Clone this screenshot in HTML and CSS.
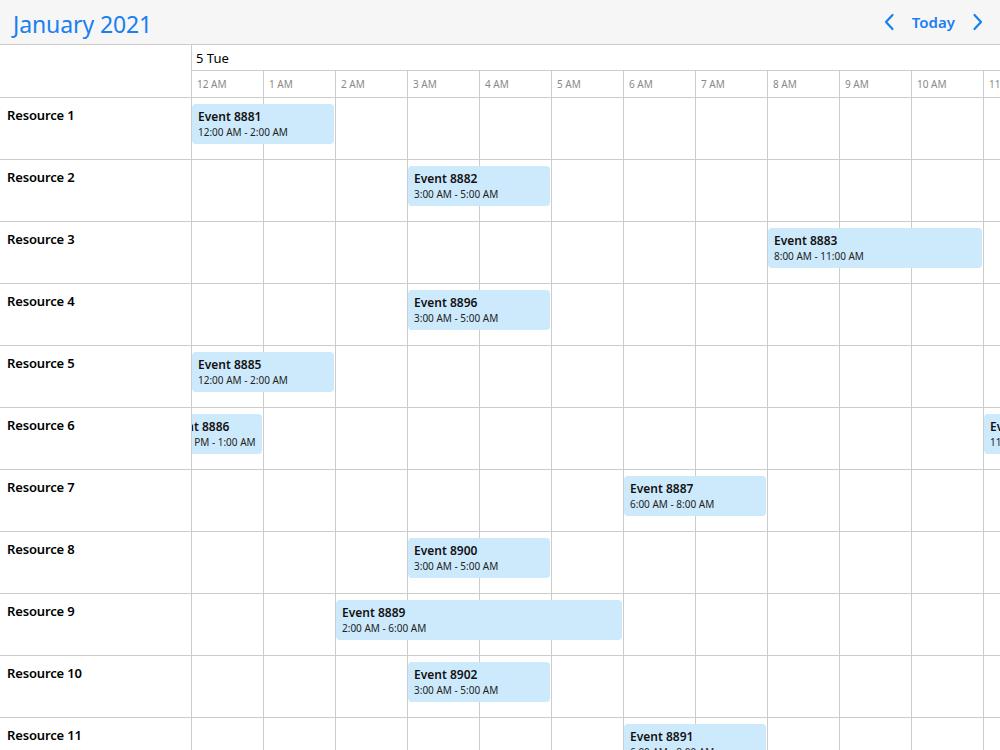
FILE: index.html
```html
<!DOCTYPE html>
<html>
<head>
<meta charset="utf-8">
<link rel="stylesheet" href="styles.css">
</head>
<body>
<div class="app">
  <header class="toolbar">
    <h1 class="title">January 2021</h1>
    <nav class="nav">
      <button class="nav-btn" aria-label="Previous">
        <svg width="12" height="18" viewBox="0 0 12 18"><path d="M9.5 2 L3 9 L9.5 16" fill="none" stroke="currentColor" stroke-width="2.2" stroke-linecap="round" stroke-linejoin="round"/></svg>
      </button>
      <button class="nav-today">Today</button>
      <button class="nav-btn" aria-label="Next">
        <svg width="12" height="18" viewBox="0 0 12 18"><path d="M2.5 2 L9 9 L2.5 16" fill="none" stroke="currentColor" stroke-width="2.2" stroke-linecap="round" stroke-linejoin="round"/></svg>
      </button>
    </nav>
  </header>

  <div class="scheduler">
    <div class="head-row">
      <div class="corner"></div>
      <div class="head-time">
        <div class="date-row">5 Tue</div>
        <div class="hours" id="hours"></div>
      </div>
    </div>
    <div id="rows"></div>
  </div>
</div>
<script src="app.js"></script>
</body>
</html>
```

FILE: app.js
```js
(function () {
  var labels = [];
  for (var h = 0; h < 24; h++) {
    var hh = h % 12 === 0 ? 12 : h % 12;
    labels.push(hh + (h < 12 ? ' AM' : ' PM'));
  }
  var hours = document.getElementById('hours');
  labels.forEach(function (l) {
    var d = document.createElement('div');
    d.className = 'hour-cell';
    d.textContent = l;
    hours.appendChild(d);
  });

  var data = [
    [["8881", 0, 2, "12:00 AM - 2:00 AM"]],
    [["8882", 3, 5, "3:00 AM - 5:00 AM"]],
    [["8883", 8, 11, "8:00 AM - 11:00 AM"]],
    [["8896", 3, 5, "3:00 AM - 5:00 AM"]],
    [["8885", 0, 2, "12:00 AM - 2:00 AM"]],
    [["8886", -0.45, 1, "11:30 PM - 1:00 AM"], ["8898", 11, 13, "11:00 AM - 1:00 PM"]],
    [["8887", 6, 8, "6:00 AM - 8:00 AM"]],
    [["8900", 3, 5, "3:00 AM - 5:00 AM"]],
    [["8889", 2, 6, "2:00 AM - 6:00 AM"]],
    [["8902", 3, 5, "3:00 AM - 5:00 AM"]],
    [["8891", 6, 8, "6:00 AM - 8:00 AM"]],
    []
  ];
  var rows = document.getElementById('rows');
  data.forEach(function (evs, i) {
    var row = document.createElement('div');
    row.className = 'row';
    var res = document.createElement('div');
    res.className = 'resource';
    res.textContent = 'Resource ' + (i + 1);
    row.appendChild(res);
    var lane = document.createElement('div');
    lane.className = 'lane';
    for (var h = 0; h < 24; h++) {
      var c = document.createElement('div');
      c.className = 'cell';
      lane.appendChild(c);
    }
    evs.forEach(function (e) {
      var ev = document.createElement('div');
      ev.className = 'event';
      var left = Math.round(e[1] * 72);
      ev.style.left = left + 'px';
      ev.style.width = (e[2] * 72 - left - 2) + 'px';
      ev.innerHTML = '<div class="ev-title">Event ' + e[0] + '</div><div class="ev-time">' + e[3] + '</div>';
      lane.appendChild(ev);
    });
    row.appendChild(lane);
    rows.appendChild(row);
  });
})();
```

FILE: styles.css
```css
* { box-sizing: border-box; }
html, body {
  margin: 0;
  padding: 0;
  width: 1000px;
  height: 750px;
  overflow: hidden;
  background: #fff;
  font-family: "Segoe UI", "Noto Sans", "Open Sans", sans-serif;
  color: #000;
}
.app { width: 1000px; height: 750px; overflow: hidden; }

.toolbar {
  height: 45px;
  background: #f6f6f6;
  border-bottom: 1px solid #ccc;
  display: flex;
  align-items: center;
  justify-content: space-between;
  padding: 0 14px 0 13px;
}
.title {
  margin: 3px 0 0;
  font-size: 23px;
  font-weight: 400;
  color: #1a7ff0;
  letter-spacing: -0.1px;
}
.nav { display: flex; align-items: center; gap: 10px; }
.nav-btn, .nav-today {
  background: none;
  border: 0;
  padding: 0;
  color: #1a7ff0;
  font-family: inherit;
  cursor: pointer;
  display: flex;
  align-items: center;
}
.nav-btn { width: 16px; justify-content: center; }
.nav-today { font-size: 15px; font-weight: 600; padding: 0 5px; }

.scheduler { width: 1000px; }
.head-row { display: flex; border-bottom: 1px solid #ccc; }
.corner { width: 192px; flex: none; border-right: 1px solid #ccc; }
.head-time { flex: 1; overflow: hidden; }
.date-row {
  height: 26px;
  border-bottom: 1px solid #ccc;
  font-size: 13px;
  padding: 4px 0 0 4px;
  line-height: 18px;
}
.hours { display: flex; height: 26px; }
.hour-cell {
  width: 72px;
  flex: none;
  border-right: 1px solid #ccc;
  font-size: 10px;
  color: #888;
  padding: 7px 0 0 5px;
  line-height: 13px;
}

.row { display: flex; height: 62px; border-bottom: 1px solid #ccc; }
.resource {
  width: 192px;
  flex: none;
  border-right: 1px solid #ccc;
  font-size: 13px;
  font-weight: 600;
  padding: 8px 0 0 7px;
  line-height: 18px;
  letter-spacing: -0.15px;
}
.lane { flex: 1; position: relative; display: flex; overflow: hidden; }
.cell { width: 72px; flex: none; border-right: 1px solid #ccc; }
.event {
  position: absolute;
  top: 6px;
  height: 40px;
  background: #cdeafd;
  border-radius: 4px;
  padding: 5px 6px 0;
  white-space: nowrap;
  overflow: hidden;
}
.ev-title { font-size: 12px; font-weight: 600; line-height: 16px; color: #111; }
.ev-time { font-size: 10px; line-height: 14px; color: #222; }
```
